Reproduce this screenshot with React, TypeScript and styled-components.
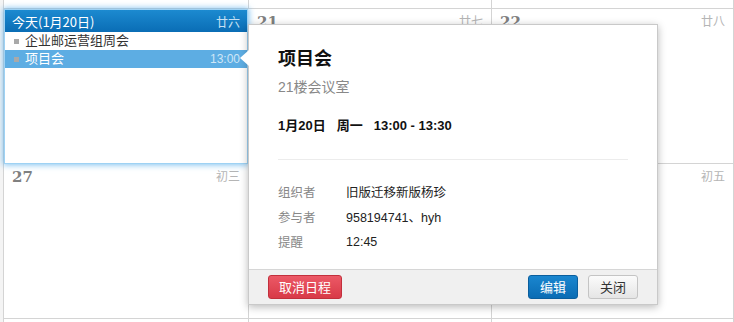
import React from "react";
import styled, { createGlobalStyle } from "styled-components";

const Global = createGlobalStyle`
  html, body { margin: 0; padding: 0; }
  body {
    background: #f4f4f4;
    font-family: "Liberation Sans", Arial, "Noto Sans CJK SC", sans-serif;
    width: 734px; height: 322px; overflow: hidden;
  }
`;

const Page = styled.div`
  position: relative;
  padding-left: 3px;
  width: 734px;
  height: 322px;
  box-sizing: border-box;
`;

const Grid = styled.div`
  display: grid;
  grid-template-columns: 245px 243px 242px;
  grid-template-rows: 9px 155px 155px 4px;
  border-left: 1px solid #d4d4d4;
  background: #fff;
  width: 731px;
  box-sizing: border-box;
`;

const Cell = styled.div`
  position: relative;
  box-sizing: border-box;
  border-right: 1px solid #d4d4d4;
  border-bottom: 1px solid #d4d4d4;
  display: flex;
  justify-content: space-between;
  align-items: flex-start;
  padding: 4px 8px 0 8px;
  background: #fff;
`;

const DayNum = styled.span`
  font-family: Georgia, "DejaVu Serif", "Liberation Serif", serif;
  font-size: 15px;
  font-weight: bold;
  color: #808080;
  line-height: 18px;
`;

const Lunar = styled.span`
  font-size: 12px;
  color: #b5b5b5;
  line-height: 16px;
  font-family: "Noto Sans CJK SC", sans-serif;
`;

const Today = styled.div`
  position: relative;
  z-index: 1;
  box-sizing: border-box;
  width: 244px;
  height: 155px;
  background: #fff;
  border: 1px solid #9ed2f4;
  box-shadow: 0 0 6px 1px rgba(90, 175, 235, 0.75);
  display: flex;
  flex-direction: column;
`;

const TodayHead = styled.div`
  height: 22px;
  flex: none;
  background: linear-gradient(#1c8ad0, #0a6db5);
  color: #fff;
  display: flex;
  justify-content: space-between;
  align-items: center;
  padding: 0 7px 0 7px;
  font-size: 13px;
  font-family: "Noto Sans CJK SC", sans-serif;
`;

const HeadLunar = styled.span`
  color: #c6e0f3;
  font-size: 12px;
`;

const EventRow = styled.div<{ $active?: boolean }>`
  height: 18px;
  flex: none;
  display: flex;
  align-items: center;
  padding: 0 7px 0 9px;
  font-size: 13px;
  line-height: 18px;
  font-family: "Liberation Sans", "Noto Sans CJK SC", sans-serif;
  color: ${(p) => (p.$active ? "#fff" : "#333")};
  background: ${(p) => (p.$active ? "#5dade3" : "transparent")};
`;

const Bullet = styled.span`
  width: 5px;
  height: 5px;
  background: #a9a9a9;
  margin-right: 6px;
  flex: none;
`;

const EventTitle = styled.span`
  flex: 1;
`;

const EventTime = styled.span`
  color: #cfe6f6;
  font-size: 12px;
`;

const Popup = styled.div`
  position: absolute;
  left: 248px;
  top: 24px;
  width: 410px;
  height: 281px;
  box-sizing: border-box;
  background: #fff;
  border: 1px solid #c9c9c9;
  box-shadow: 0 2px 8px rgba(0, 0, 0, 0.28);
  z-index: 5;
  display: flex;
  flex-direction: column;
`;

const Arrow = styled.div`
  position: absolute;
  left: -9px;
  top: 25px;
  width: 0;
  height: 0;
  border-top: 8px solid transparent;
  border-bottom: 8px solid transparent;
  border-right: 9px solid #fff;
`;

const PopBody = styled.div`
  height: 244px;
  box-sizing: border-box;
  padding: 21px 29px 0 29px;
  display: flex;
  flex-direction: column;
`;

const Title = styled.div`
  font-size: 18px;
  font-weight: bold;
  color: #111;
  line-height: 22px;
  font-family: "Noto Sans CJK SC", sans-serif;
`;

const Location = styled.div`
  margin-top: 9px;
  font-size: 14px;
  color: #888;
  line-height: 20px;
  font-family: "Liberation Sans", "Noto Sans CJK SC", sans-serif;
`;

const DateLine = styled.div`
  margin-top: 19px;
  font-size: 13px;
  font-weight: bold;
  color: #111;
  line-height: 20px;
  display: flex;
  gap: 11px;
  font-family: "Liberation Sans", "Noto Sans CJK SC", sans-serif;
`;

const Divider = styled.div`
  margin-top: 23px;
  height: 1px;
  width: 350px;
  background: #ececec;
`;

const Details = styled.div`
  margin-top: 19px;
  display: grid;
  grid-template-columns: 68px 1fr;
  grid-auto-rows: 25px;
  align-items: center;
  font-size: 12.5px;
  font-family: "Liberation Sans", "Noto Sans CJK SC", sans-serif;
`;

const Label = styled.span`
  color: #888;
`;

const Value = styled.span`
  color: #222;
`;

const Footer = styled.div`
  flex: 1;
  background: #f0f0f0;
  border-top: 1px solid #d6d6d6;
  display: flex;
  align-items: center;
  padding: 0 19px;
  gap: 10px;
`;

const Spacer = styled.div`
  flex: 1;
`;

const Btn = styled.button<{ $kind: "danger" | "primary" | "default"; $w: number }>`
  width: ${(p) => p.$w}px;
  height: 24px;
  box-sizing: border-box;
  border-radius: 3px;
  font-size: 13px;
  font-family: "Noto Sans CJK SC", sans-serif;
  padding: 0;
  line-height: 22px;
  cursor: pointer;
  color: ${(p) => (p.$kind === "default" ? "#333" : "#fff")};
  border: 1px solid
    ${(p) => (p.$kind === "danger" ? "#c2303c" : p.$kind === "primary" ? "#0a5e9d" : "#c4c4c4")};
  background: ${(p) =>
    p.$kind === "danger"
      ? "linear-gradient(#ec5966, #d83a48)"
      : p.$kind === "primary"
      ? "linear-gradient(#1a86cf, #0a6cb4)"
      : "linear-gradient(#fbfbfb, #e5e5e5)"};
`;

export default function App() {
  return (
    <>
      <Global />
      <Page>
        <Grid>
          <Cell />
          <Cell />
          <Cell />

          <Today>
            <TodayHead>
              <span>今天(1月20日)</span>
              <HeadLunar>廿六</HeadLunar>
            </TodayHead>
            <EventRow>
              <Bullet />
              <EventTitle>企业邮运营组周会</EventTitle>
            </EventRow>
            <EventRow $active>
              <Bullet />
              <EventTitle>项目会</EventTitle>
              <EventTime>13:00</EventTime>
            </EventRow>
          </Today>
          <Cell>
            <DayNum>21</DayNum>
            <Lunar>廿七</Lunar>
          </Cell>
          <Cell>
            <DayNum>22</DayNum>
            <Lunar>廿八</Lunar>
          </Cell>

          <Cell>
            <DayNum>27</DayNum>
            <Lunar>初三</Lunar>
          </Cell>
          <Cell>
            <DayNum>28</DayNum>
            <Lunar>初四</Lunar>
          </Cell>
          <Cell>
            <DayNum>29</DayNum>
            <Lunar>初五</Lunar>
          </Cell>

          <Cell />
          <Cell />
          <Cell />
        </Grid>

        <Popup>
          <Arrow />
          <PopBody>
            <Title>项目会</Title>
            <Location>21楼会议室</Location>
            <DateLine>
              <span>1月20日</span>
              <span>周一</span>
              <span>13:00 - 13:30</span>
            </DateLine>
            <Divider />
            <Details>
              <Label>组织者</Label>
              <Value>旧版迁移新版杨珍</Value>
              <Label>参与者</Label>
              <Value>958194741、hyh</Value>
              <Label>提醒</Label>
              <Value>12:45</Value>
            </Details>
          </PopBody>
          <Footer>
            <Btn $kind="danger" $w={74}>取消日程</Btn>
            <Spacer />
            <Btn $kind="primary" $w={50}>编辑</Btn>
            <Btn $kind="default" $w={50}>关闭</Btn>
          </Footer>
        </Popup>
      </Page>
    </>
  );
}
